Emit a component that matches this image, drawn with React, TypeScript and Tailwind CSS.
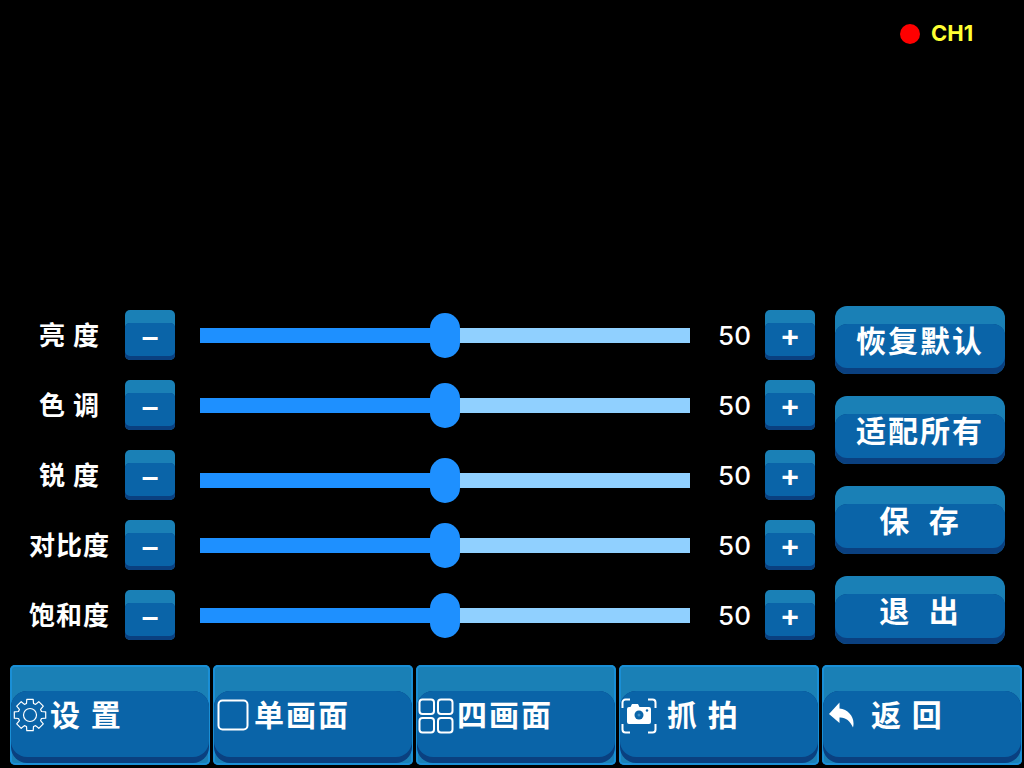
import { ReactNode } from 'react'

const FONT = '"Noto Sans CJK SC", sans-serif'

const rows = [
  { label: '亮 度', sliderClass: 'mt-0' },
  { label: '色 调', sliderClass: 'mt-0' },
  { label: '锐 度', sliderClass: 'mt-[10px]' },
  { label: '对比度', sliderClass: 'mt-0' },
  { label: '饱和度', sliderClass: 'mt-0' },
]

function gearPath() {
  const c = 17
  const pts: string[] = []
  for (let i = 0; i < 8; i++) {
    const a = (i * Math.PI) / 4
    const at = (r: number, d: number) => {
      const x = c + r * Math.cos(a + d)
      const y = c + r * Math.sin(a + d)
      return `${x.toFixed(1)} ${y.toFixed(1)}`
    }
    pts.push(at(12, -0.3), at(16, -0.2), at(16, 0.2), at(12, 0.3))
  }
  return `M${pts.join('L')}Z`
}

function SmallButton({ children }: { children: string }) {
  return (
    <div className="flex h-[50px] w-[50px] shrink-0 flex-col rounded-[5px] bg-[#1a80b6] pt-[13px]">
      <div className="flex min-h-0 flex-1 flex-col rounded-[5px] bg-[#0a4080] pb-[4px]">
        <div className="flex min-h-0 flex-1 items-center justify-center rounded-[5px] bg-[#0a64a8] pb-[6px] font-['Liberation_Sans'] text-[30px] leading-[20px] font-bold text-white">
          {children}
        </div>
      </div>
    </div>
  )
}

function SideButton({ children }: { children: string }) {
  return (
    <div className="flex h-[68px] w-[170px] flex-col rounded-[12px] bg-[#1a80b6] pt-[18px]">
      <div className="flex min-h-0 flex-1 flex-col rounded-[12px] bg-[#0a4080] pb-[6px]">
        <div className="flex min-h-0 flex-1 items-center justify-center rounded-[12px] bg-[#0a64a8] pb-[14px] text-[30px] leading-[20px] font-bold tracking-[2px] whitespace-pre text-white">
          {children}
        </div>
      </div>
    </div>
  )
}

function BarButton({ icon, text, pad, gap }: { icon: ReactNode; text: string; pad: string; gap: string }) {
  return (
    <div className="flex h-[100px] w-[200px] flex-col rounded-[5px] bg-[#1a80b6] pt-[26px] pb-[2px] shadow-[inset_0_0_0_2px_#1a8fd6]">
      <div className="mx-[1px] flex min-h-0 flex-1 flex-col rounded-[16px] bg-[#0a4080] pb-[6px]">
        <div className={`flex min-h-0 flex-1 items-center rounded-[16px] bg-[#0a64a8] pb-[16px] text-[30px] leading-none font-bold tracking-[2px] whitespace-pre text-white ${pad} ${gap}`}>
          {icon}
          <span className="-mt-[7px]">{text}</span>
        </div>
      </div>
    </div>
  )
}

function Slider({ className }: { className: string }) {
  return (
    <div className={`flex h-[45px] w-[490px] items-center ${className}`}>
      <div className="h-[15px] w-[245px] bg-[#1e90ff]" />
      <div className="z-10 -mx-[15px] h-[45px] w-[30px] shrink-0 rounded-[15px] bg-[#1e90ff]" />
      <div className="h-[15px] w-[245px] bg-[#90d0ff]" />
    </div>
  )
}

export default function App() {
  return (
    <div className="flex h-[768px] w-[1024px] flex-col overflow-hidden bg-black" style={{ fontFamily: FONT }}>
      <div className="flex h-[306px] items-start pt-[24px] pl-[900px]">
        <div className="h-[20px] w-[20px] rounded-full bg-[#ff0000]" />
        <span className="-mt-[1px] ml-[11px] font-['Inter'] text-[22px] leading-[20px] font-bold text-[#ffff33]">CH1</span>
      </div>

      <div className="flex h-[359px] items-start">
        <div className="flex flex-col gap-[20px] pt-[4px]">
          {rows.map(row => (
            <div key={row.label} className="flex h-[50px] items-center">
              <div className="w-[125px] pb-[2px] pl-[14px] text-center text-[26px] leading-none font-bold tracking-[1px] whitespace-pre text-white">
                {row.label}
              </div>
              <SmallButton>–</SmallButton>
              <div className="ml-[25px] flex h-[50px] items-center">
                <Slider className={row.sliderClass} />
              </div>
              <div className="w-[75px] pt-[2px] pl-[14px] text-center font-['Inter'] text-[26px] leading-none font-medium text-white">50</div>
              <SmallButton>+</SmallButton>
            </div>
          ))}
        </div>
        <div className="ml-[20px] flex flex-col gap-[22px]">
          <SideButton>恢复默认</SideButton>
          <SideButton>适配所有</SideButton>
          <SideButton>{'保  存'}</SideButton>
          <SideButton>{'退  出'}</SideButton>
        </div>
      </div>

      <div className="flex gap-[3px] pl-[10px]">
        <BarButton
          pad="pl-[2px]"
          gap="gap-[3px]"
          text="设 置"
          icon={
            <svg width="34" height="34" viewBox="0 0 34 34" fill="none" stroke="white" strokeWidth="1.2" strokeLinejoin="round" className="-mt-[3px]">
              <path d={gearPath()} />
              <circle cx="17" cy="17" r="6.500" />
            </svg>
          }
        />
        <BarButton
          pad="pl-[3px]"
          gap="gap-[5px]"
          text="单画面"
          icon={
            <svg width="32" height="32" viewBox="0 0 32 32" fill="none" stroke="white" strokeWidth="2" className="-mt-[3px]">
              <rect x="1.5" y="1.5" width="29" height="29" rx="4" />
            </svg>
          }
        />
        <BarButton
          pad="pl-[1px]"
          gap="gap-[3px]"
          text="四画面"
          icon={
            <svg width="36" height="36" viewBox="0 0 36 36" fill="none" stroke="white" strokeWidth="2" className="-mt-[1px]">
              <rect x="1.5" y="1.5" width="14.5" height="14.5" rx="3" />
              <rect x="20" y="1.5" width="14.5" height="14.5" rx="3" />
              <rect x="1.5" y="20" width="14.5" height="14.5" rx="3" />
              <rect x="20" y="20" width="14.5" height="14.5" rx="3" />
            </svg>
          }
        />
        <BarButton
          pad="pl-[1px]"
          gap="gap-[10px]"
          text="抓 拍"
          icon={
            <svg width="36" height="36" viewBox="0 0 36 36" fill="none" className="-mt-[1px]">
              <path d="M9 1.500H4.500a3 3 0 0 0-3 3V10M27 1.500h4.500a3 3 0 0 1 3 3V10M9 34.500H4.500a3 3 0 0 1-3-3V26M27 34.500h4.500a3 3 0 0 0 3-3V26" stroke="white" strokeWidth="2" />
              <path fill="white" d="M8 9h1.500l1.500-3h6l1.500 3H28a2 2 0 0 1 2 2v13a2 2 0 0 1-2 2H8a2 2 0 0 1-2-2V11a2 2 0 0 1 2-2z" />
              <circle cx="18" cy="17" r="4.500" fill="#0a64a8" />
              <circle cx="18" cy="17" r="1.500" fill="#3f8cc4" />
              <circle cx="26" cy="12.500" r="1.200" fill="#0a64a8" />
            </svg>
          }
        />
        <BarButton
          pad="pl-[6px]"
          gap="gap-[16px]"
          text="返 回"
          icon={
            <svg width="26" height="26" viewBox="0 0 26 26" fill="white" className="-mt-[2px]">
              <path d="M10.500 0.500 L0 12 L10.500 21 V15.500 C16 15 21 18.500 24 25.500 C26.500 16 20 7.500 10.500 6.500 Z" />
            </svg>
          }
        />
      </div>
    </div>
  )
}
